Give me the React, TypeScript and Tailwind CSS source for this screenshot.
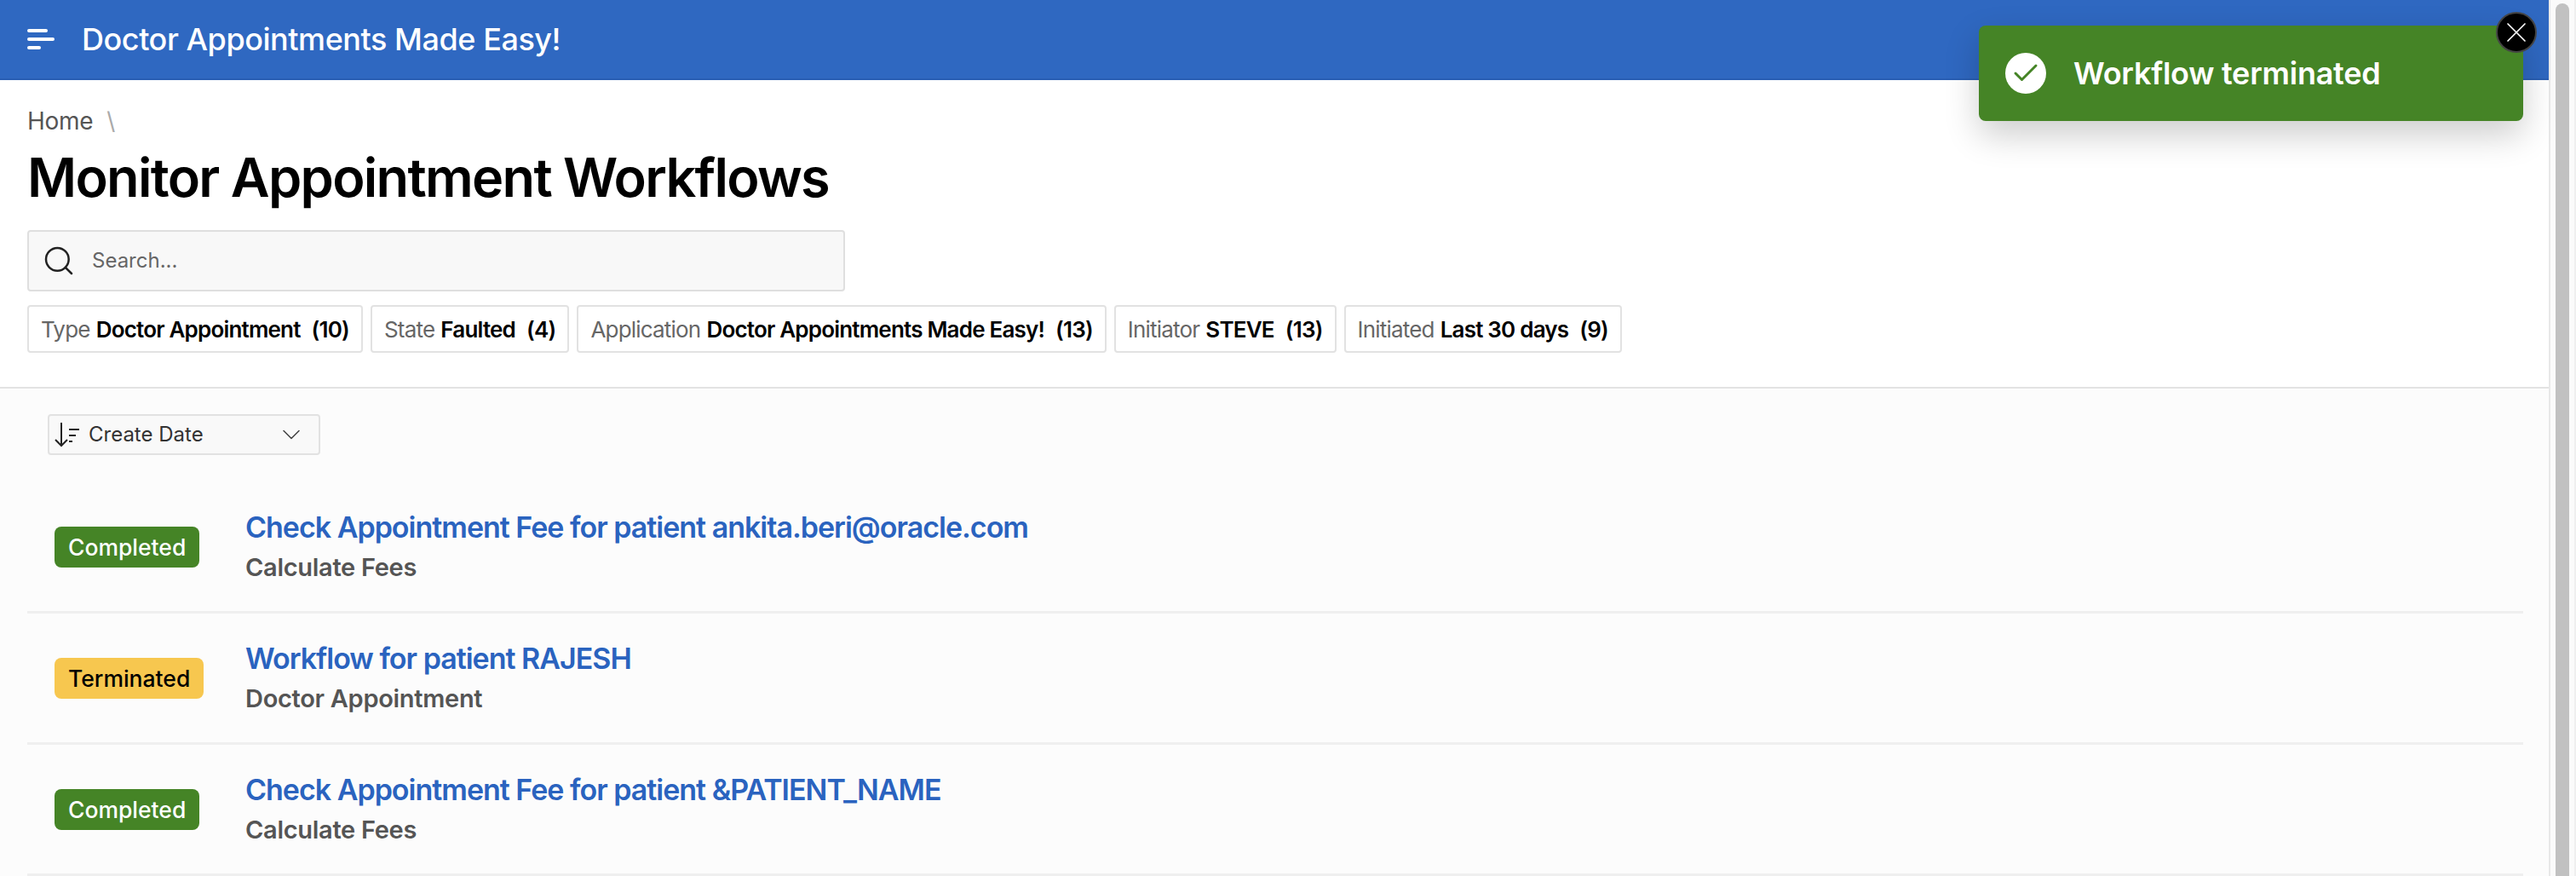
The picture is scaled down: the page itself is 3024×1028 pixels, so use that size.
import { Check, ChevronDown, Search, X } from 'lucide-react';

const filters = [
  { label: 'Type', value: 'Doctor Appointment', count: 10 },
  { label: 'State', value: 'Faulted', count: 4 },
  { label: 'Application', value: 'Doctor Appointments Made Easy!', count: 13 },
  { label: 'Initiator', value: 'STEVE', count: 13 },
  { label: 'Initiated', value: 'Last 30 days', count: 9 },
];

const workflows = [
  { status: 'Completed', title: 'Check Appointment Fee for patient ankita.beri@oracle.com', sub: 'Calculate Fees' },
  { status: 'Terminated', title: 'Workflow for patient RAJESH', sub: 'Doctor Appointment' },
  { status: 'Completed', title: 'Check Appointment Fee for patient &PATIENT_NAME', sub: 'Calculate Fees' },
];

function StatusBadge({ status }: { status: string }) {
  const done = status === 'Completed';
  return (
    <span
      className={`flex h-12 items-center rounded-lg px-4 pt-[2px] text-[26.5px] font-medium ${
        done ? 'bg-[#458426] text-white' : 'bg-[#f7c74f] text-black'
      }`}
    >
      {status}
    </span>
  );
}

export default function App() {
  return (
    <div className="relative flex h-[1028px] w-[3024px] overflow-hidden bg-white font-['Inter',sans-serif]">
      <div className="flex w-[2994px] flex-col border-r-2 border-[#e8e8e8]">
        {/* Header */}
        <header className="flex h-[94px] shrink-0 items-center gap-8 border-b-2 border-[#2a5fb3] bg-[#2f68c1] pl-8">
          <div className="flex w-8 flex-col gap-1.5">
            <span className="h-1 w-6 rounded-full bg-white" />
            <span className="h-1 w-8 rounded-full bg-white" />
            <span className="h-1 w-4 rounded-full bg-white" />
          </div>
          <span className="text-[36px] font-medium tracking-[-0.45px] text-white">Doctor Appointments Made Easy!</span>
        </header>

        {/* Page title and search */}
        <section className="h-[362px] shrink-0 border-b-2 border-[#e3e3e3] px-8 pt-[32px]">
          <div className="flex h-[32px] items-center gap-4 text-[28px] tracking-[-0.3px] text-[#555]">
            <span>Home</span>
            <span className="text-[#aaa]">\</span>
          </div>
          <h1 className="mt-[12px] text-[63px] leading-[76px] font-semibold tracking-[-1.7px] text-black">
            Monitor Appointment Workflows
          </h1>
          <div className="mt-[24px] flex h-[72px] w-[960px] items-center gap-[19px] rounded border-2 border-[#dfdfdf] bg-[#f8f8f8] pl-[15px]">
            <Search className="h-10 w-10 text-[#222]" strokeWidth={1.5} />
            <span className="text-[24px] text-[#666]">Search...</span>
          </div>
          <div className="mt-4 flex gap-[9px]">
            {filters.map((f) => (
              <div
                key={f.label}
                className="flex h-[56px] items-center rounded border-2 border-[#e2e2e2] bg-white px-[14px] text-[26px] tracking-[-0.8px] whitespace-nowrap"
              >
                <span className="mr-[7px] text-[#666]">{f.label}</span>
                <span className="font-semibold text-black">{f.value}</span>
                <span className="ml-[13px] font-semibold text-black">({f.count})</span>
              </div>
            ))}
          </div>
        </section>

        {/* Results */}
        <section className="flex-1 bg-[#fcfcfc] px-8 pt-[30px]">
          <div className="ml-6 flex h-12 w-80 items-center rounded border-2 border-[#e2e2e2] bg-[#f9f9f9] pl-[2px] text-[24px] text-[#333]">
            <svg className="h-9 w-9 shrink-0" viewBox="0 0 36 36" fill="none" stroke="#222" strokeWidth="2">
              <path d="M12 4v27M5 24l7 7 7-7" />
              <path d="M21 12h12M21 19h8M21 26h4" />
            </svg>
            <span className="ml-2">Create Date</span>
            <ChevronDown className="ml-auto mr-[14px] h-9 w-9 text-[#444]" strokeWidth={1} />
          </div>
          <div className="mt-[32px] w-[2930px]">
            {workflows.map((w, i) => (
              <div key={i} className="flex h-[154px] items-center border-b-[3px] border-[#efefef] pl-8">
                <div className="flex w-[224px] shrink-0">
                  <StatusBadge status={w.status} />
                </div>
                <div className="flex flex-col gap-[9px] pb-[2px]">
                  <span className="text-[34px] leading-[42px] font-semibold tracking-[-1px] text-[#2a63bf]">{w.title}</span>
                  <span className="text-[29px] leading-[34px] font-semibold tracking-[-0.3px] text-[#555]">{w.sub}</span>
                </div>
              </div>
            ))}
          </div>
        </section>
      </div>

      {/* Scrollbar */}
      <div className="flex flex-1 justify-start border-r-2 border-[#efefef] bg-[#fafafa] pt-1 pl-[6px]">
        <div className="h-full w-4 rounded-t-full bg-[#c1c1c1]" />
      </div>

      {/* Success toast */}
      <div className="absolute top-[30px] left-[2323px] flex h-[112px] w-[639px] items-center rounded-lg bg-[#458426] pl-[31px] shadow-[0_16px_40px_rgba(0,0,0,0.2)]">
        <span className="flex h-12 w-12 items-center justify-center rounded-full bg-white">
          <Check className="h-9 w-9 text-[#458426]" strokeWidth={2} />
        </span>
        <span className="ml-[32px] text-[36px] font-semibold tracking-[-0.25px] text-white">Workflow terminated</span>
      </div>
      <button className="absolute top-[14px] left-[2930px] flex h-12 w-12 items-center justify-center rounded-full border-2 border-[#444] bg-black text-white">
        <X className="h-10 w-10" strokeWidth={1} />
      </button>
    </div>
  );
}
